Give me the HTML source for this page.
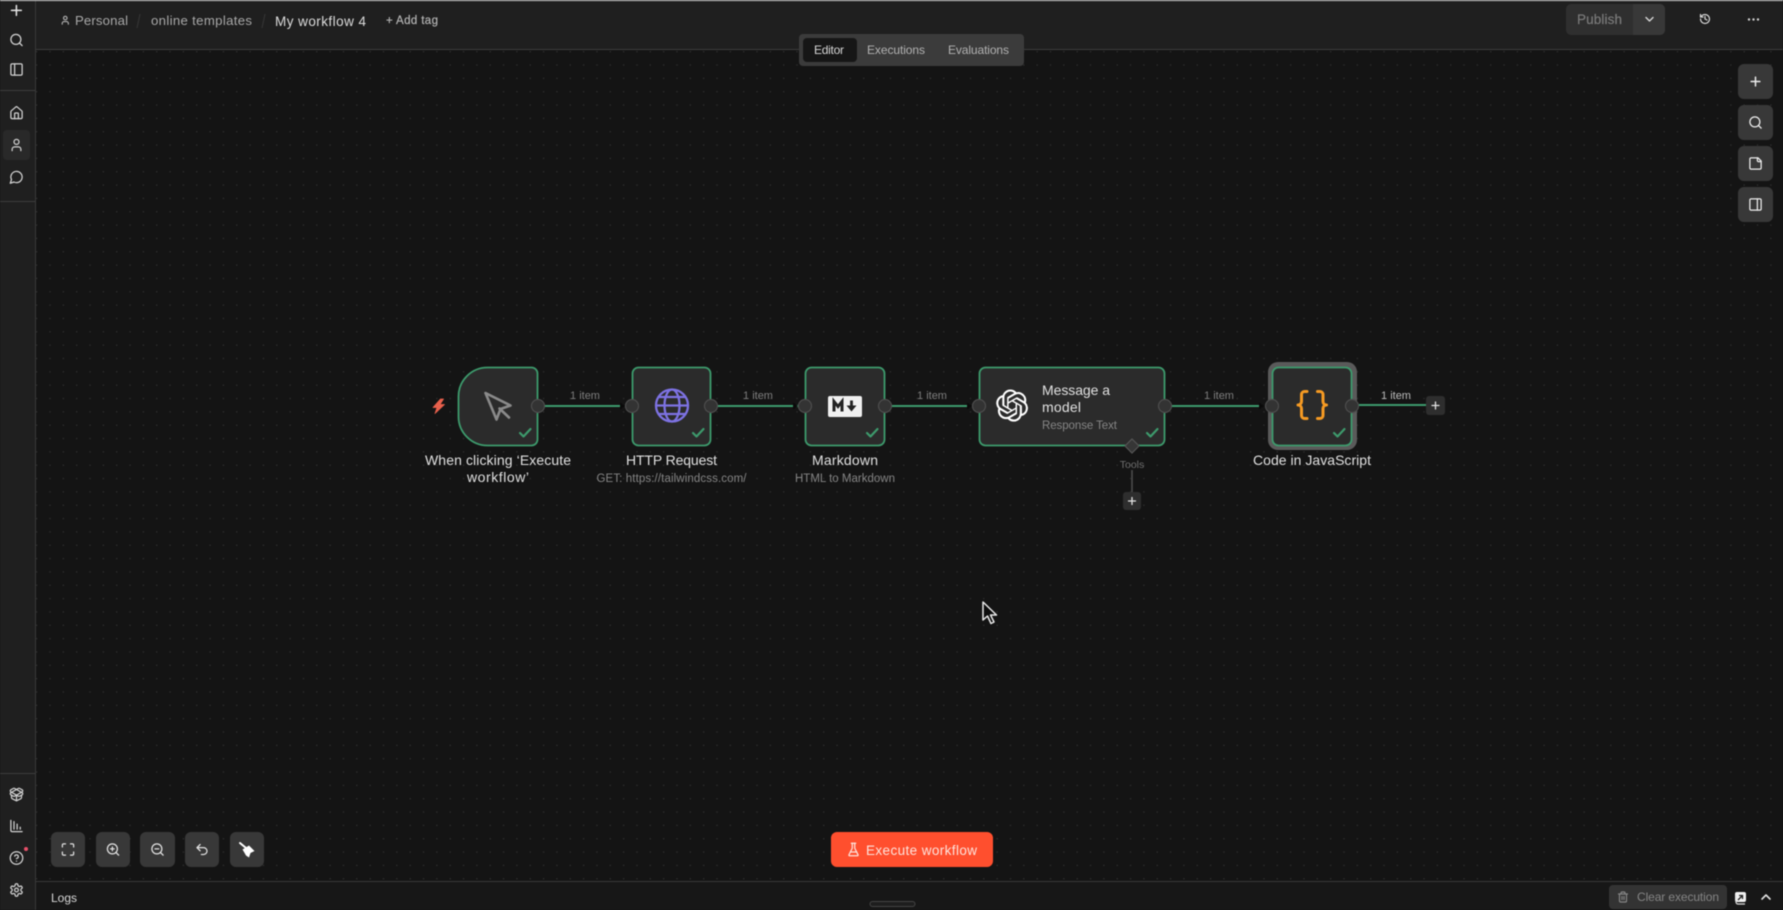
<!DOCTYPE html>
<html lang="en">
<head>
<meta charset="utf-8">
<title>My workflow 4</title>
<style>
html,body{margin:0;padding:0;width:1783px;height:910px;overflow:hidden;background:#141414}
svg{display:block;filter:blur(.4px)}
text{font-family:"Liberation Sans",sans-serif}
.i{fill:none;stroke-linecap:round;stroke-linejoin:round;stroke-width:2}
</style>
</head>
<body>
<svg width="1783" height="910" viewBox="0 0 1783 910" xmlns="http://www.w3.org/2000/svg">
<defs>
<pattern id="dots" x="30" y="45" width="13.34" height="13.34" patternUnits="userSpaceOnUse">
<circle cx="6.67" cy="6.67" r="0.6" fill="#3a3a3a"/>
</pattern>
</defs>

<!-- canvas -->
<rect width="1783" height="910" fill="#141414"/>
<rect x="36" y="50" width="1747" height="832" fill="url(#dots)"/>

<!-- header -->
<rect x="0" y="0" width="1783" height="49" fill="#1f1f1f"/>
<rect x="36" y="49" width="1747" height="1" fill="#3d3d3d"/>

<!-- sidebar -->
<rect x="0" y="0" width="35" height="910" fill="#1f1f1f"/>
<rect x="0" y="0" width="1783" height="1" fill="#dcdcdc"/>
<rect x="35" y="1" width="1" height="909" fill="#383838"/>
<rect x="0" y="90" width="35" height="1" fill="#3d3d3d"/>
<rect x="0" y="201" width="35" height="1" fill="#3d3d3d"/>
<rect x="0" y="773" width="35" height="1" fill="#3d3d3d"/>
<rect x="3" y="130" width="27" height="30" rx="4" fill="#292929"/>

<!-- sidebar icons -->
<g class="i" stroke="#e6e6e6">
<g transform="translate(8,2) scale(.7)"><path d="M5 12h14M12 5v14" stroke-width="2.2"/></g>
</g>
<g class="i" stroke="#d2d2d2" stroke-width="2">
<g transform="translate(9,32.5) scale(.625)"><circle cx="11" cy="11" r="8"/><path d="M21 21l-4.3-4.3"/></g>
<g transform="translate(9,62) scale(.625)"><rect x="3" y="3" width="18" height="18" rx="2"/><path d="M9 3v18"/></g>
<g transform="translate(9,105.5) scale(.625)"><path d="M15 21v-8a1 1 0 0 0-1-1h-4a1 1 0 0 0-1 1v8"/><path d="M3 10a2 2 0 0 1 .709-1.528l7-5.999a2 2 0 0 1 2.582 0l7 5.999A2 2 0 0 1 21 10v9a2 2 0 0 1-2 2H5a2 2 0 0 1-2-2z"/></g>
<g transform="translate(9,137.5) scale(.625)"><path d="M19 21v-2a4 4 0 0 0-4-4H9a4 4 0 0 0-4 4v2"/><circle cx="12" cy="7" r="4"/></g>
<g transform="translate(9,169.5) scale(.625)"><path d="M7.9 20A9 9 0 1 0 4 16.1L2 22Z"/></g>
<g transform="translate(9,787) scale(.625)"><path d="M12 22v-9"/><path d="M15.17 2.21a1.67 1.67 0 0 1 1.63 0L21 4.57a1.93 1.93 0 0 1 0 3.36L8.82 14.79a1.655 1.655 0 0 1-1.64 0L3 12.43a1.93 1.93 0 0 1 0-3.36z"/><path d="M20 13v3.87a2.06 2.06 0 0 1-1.11 1.83l-6 3.08a1.93 1.93 0 0 1-1.78 0l-6-3.08A2.06 2.06 0 0 1 4 16.87V13"/><path d="M21 12.43a1.93 1.93 0 0 0 0-3.36L8.83 2.2a1.64 1.64 0 0 0-1.63 0L3 4.57a1.93 1.93 0 0 0 0 3.36l12.18 6.86a1.636 1.636 0 0 0 1.63 0z"/></g>
<g transform="translate(9,818.5) scale(.625)"><path d="M3 3v16a2 2 0 0 0 2 2h16"/><path d="M8 17V5M13 17V9M18 17v-3"/></g>
<g transform="translate(9,850.5) scale(.625)"><circle cx="12" cy="12" r="10"/><path d="M9.09 9a3 3 0 0 1 5.83 1c0 2-3 3-3 3"/><path d="M12 17h.01"/></g>
<g transform="translate(9,882.5) scale(.625)"><path d="M12.22 2h-.44a2 2 0 0 0-2 2v.18a2 2 0 0 1-1 1.73l-.43.25a2 2 0 0 1-2 0l-.15-.08a2 2 0 0 0-2.73.73l-.22.38a2 2 0 0 0 .73 2.73l.15.1a2 2 0 0 1 1 1.72v.51a2 2 0 0 1-1 1.74l-.15.09a2 2 0 0 0-.73 2.73l.22.38a2 2 0 0 0 2.73.73l.15-.08a2 2 0 0 1 2 0l.43.25a2 2 0 0 1 1 1.73V20a2 2 0 0 0 2 2h.44a2 2 0 0 0 2-2v-.18a2 2 0 0 1 1-1.73l.43-.25a2 2 0 0 1 2 0l.15.08a2 2 0 0 0 2.73-.73l.22-.39a2 2 0 0 0-.73-2.73l-.15-.08a2 2 0 0 1-1-1.74v-.5a2 2 0 0 1 1-1.74l.15-.09a2 2 0 0 0 .73-2.73l-.22-.38a2 2 0 0 0-2.73-.73l-.15.08a2 2 0 0 1-2 0l-.43-.25a2 2 0 0 1-1-1.73V4a2 2 0 0 0-2-2z"/><circle cx="12" cy="12" r="3"/></g>
</g>
<circle cx="26" cy="849" r="2" fill="#e8506a"/>

<!-- breadcrumbs -->
<g class="i" stroke="#b0b0b0"><g transform="translate(60,15) scale(.44)" style="stroke-width:2.6"><path d="M19 21v-2a4 4 0 0 0-4-4H9a4 4 0 0 0-4 4v2"/><circle cx="12" cy="7" r="4"/></g></g>
<text x="75" y="25" font-size="13.2" fill="#a8a8a8" textLength="53">Personal</text>
<path d="M140 14l-3 14" stroke="#333" stroke-width="1.2"/>
<text x="151" y="25" font-size="13.2" fill="#a8a8a8" textLength="101">online templates</text>
<path d="M265 14l-3 14" stroke="#333" stroke-width="1.2"/>
<text x="275" y="26" font-size="13.5" fill="#dcdcdc" textLength="91">My workflow 4</text>
<text x="386" y="24" font-size="11.5" fill="#b4b4b4" stroke="#b4b4b4" stroke-width=".2" textLength="52">+ Add tag</text>

<!-- publish -->
<rect x="1566" y="4" width="99" height="31" rx="5" fill="#2f2f2f"/>
<path d="M1633 4h27a5 5 0 0 1 5 5v21a5 5 0 0 1-5 5h-27z" fill="#383838"/>
<text x="1577" y="24" font-size="13.5" fill="#7a7a7a" stroke="#7a7a7a" stroke-width=".2" textLength="45">Publish</text>
<path d="M1646 17.5l3.5 3.5 3.5-3.5" fill="none" stroke="#d8d8d8" stroke-width="1.4" stroke-linecap="round" stroke-linejoin="round"/>
<g class="i" stroke="#d8d8d8"><g transform="translate(1699,13) scale(.5)" style="stroke-width:2.4"><path d="M3 12a9 9 0 1 0 9-9 9.75 9.75 0 0 0-6.74 2.74L3 8"/><path d="M3 3v5h5"/><path d="M12 7v5l4 2"/></g></g>
<g fill="#d0d0d0"><circle cx="1749" cy="19.5" r="1.2"/><circle cx="1753.5" cy="19.5" r="1.2"/><circle cx="1758" cy="19.5" r="1.2"/></g>

<!-- tabs -->
<rect x="799" y="34" width="225" height="32" rx="4" fill="#3b3b3b"/>
<rect x="803" y="38" width="54" height="24" rx="4" fill="#161616"/>
<text x="814" y="54" font-size="12" fill="#d6d6d6" textLength="30">Editor</text>
<text x="867" y="54" font-size="12" fill="#b2b2b2" textLength="58">Executions</text>
<text x="948" y="54" font-size="12" fill="#b2b2b2" textLength="61">Evaluations</text>

<!-- right buttons -->
<g fill="#383838">
<rect x="1738" y="64" width="35" height="35" rx="6"/>
<rect x="1738" y="105" width="35" height="35" rx="6"/>
<rect x="1738" y="146" width="35" height="35" rx="6"/>
<rect x="1738" y="187" width="35" height="35" rx="6"/>
</g>
<g class="i" stroke="#ececec">
<g transform="translate(1748,74) scale(.625)"><path d="M5 12h14M12 5v14" stroke-width="2.4"/></g>
<g transform="translate(1748,115) scale(.625)"><circle cx="11" cy="11" r="8"/><path d="M21 21l-4.3-4.3"/></g>
<g transform="translate(1748,156) scale(.625)"><path d="M16 3H5a2 2 0 0 0-2 2v14a2 2 0 0 0 2 2h14a2 2 0 0 0 2-2V8Z"/><path d="M15 3v4a2 2 0 0 0 2 2h4"/></g>
<g transform="translate(1748,197) scale(.625)"><rect x="3" y="3" width="18" height="18" rx="2"/><path d="M15 3v18"/></g>
</g>

<!-- connections -->
<g stroke="#3d9a6c" stroke-width="2.1" fill="none">
<path d="M545 406h78"/><path d="M718 406h80"/><path d="M892 406h78"/><path d="M1172 406h90"/>
<path d="M1359 405h67"/>
</g>
<g fill="#0a0a0a">
<path d="M620 402.5l5 3.5-5 3.5z"/><path d="M793 402.5l5 3.5-5 3.5z"/><path d="M967 402.5l5 3.5-5 3.5z"/><path d="M1259 402.5l5 3.5-5 3.5z"/>
</g>
<path d="M1132 470v22" stroke="#4d4d4d" stroke-width="1.5"/>
<g font-size="11" fill="#7e7e7e" text-anchor="middle">
<text x="585" y="399">1 item</text>
<text x="758" y="399">1 item</text>
<text x="932" y="399">1 item</text>
<text x="1219" y="399">1 item</text>
<text x="1396" y="399" fill="#bcbcbc">1 item</text>
<text x="1132" y="468" font-size="10.5" fill="#6e6e6e">Tools</text>
</g>

<!-- halo -->
<rect x="1268" y="362" width="89" height="88" rx="10" fill="#5a5a5a"/>

<!-- nodes -->
<g fill="#2b2b2b" stroke="#3d9a6c" stroke-width="1.8">
<path d="M487.500 367.500h44a6 6 0 0 1 6 6v66a6 6 0 0 1-6 6h-44a29 29 0 0 1-29-29v-20a29 29 0 0 1 29-29z"/>
<rect x="632.500" y="367.500" width="78" height="78" rx="6"/>
<rect x="805.500" y="367.500" width="79" height="78" rx="6"/>
<rect x="979.500" y="367.500" width="185" height="78" rx="6"/>
<rect x="1272.500" y="367.500" width="79" height="78" rx="6"/>
</g>

<!-- handles -->
<g fill="#333" stroke="#4d4d4d" stroke-width="1.2">
<circle cx="538" cy="406" r="6.500"/>
<circle cx="632" cy="406" r="6.500"/>
<circle cx="711" cy="406" r="6.500"/>
<circle cx="805" cy="406" r="6.500"/>
<circle cx="885" cy="406" r="6.500"/>
<circle cx="979" cy="406" r="6.500"/>
<circle cx="1165" cy="406" r="6.500"/>
<circle cx="1272" cy="406" r="6.500"/>
<circle cx="1352" cy="406" r="6.500"/>
</g>
<path d="M1132 439l7 7-7 7-7-7z" fill="#363636" stroke="#555" stroke-width="1.200"/>

<!-- plus boxes -->
<rect x="1426" y="396" width="19" height="19" rx="3" fill="#2e2e2e"/>
<path d="M1432 405.500h7M1435.500 402v7" stroke="#e4e4e4" stroke-width="1.300" stroke-linecap="round"/>
<rect x="1123" y="492" width="18" height="18" rx="3" fill="#2e2e2e"/>
<path d="M1128.500 501h7M1132 497.500v7" stroke="#e4e4e4" stroke-width="1.300" stroke-linecap="round"/>

<!-- checks -->
<g fill="none" stroke="#3d9a6c" stroke-width="2.200" stroke-linecap="round" stroke-linejoin="round">
<path d="M520 433l3.500 3.500 7-7.500"/>
<path d="M693 433l3.500 3.500 7-7.500"/>
<path d="M867 433l3.500 3.500 7-7.500"/>
<path d="M1147 433l3.500 3.500 7-7.500"/>
<path d="M1334 433l3.500 3.500 7-7.500"/>
</g>

<!-- lightning -->
<path d="M440.500 399l-7.500 8.500h4l-2 6 9.500-9h-4.500l3.500-5.500z" fill="#e8604c" stroke="#e8604c" stroke-width=".8" stroke-linejoin="round"/>

<!-- cursor -->
<path d="M485.500 393l25 12.500-10 3.500-4 10.500zM499.500 408.500l9.500 9" fill="none" stroke="#8a8a8a" stroke-width="2.600" stroke-linejoin="round" stroke-linecap="round"/>

<!-- globe -->
<g fill="none" stroke="#7d72e2" stroke-width="2.300">
<circle cx="672" cy="405.500" r="16"/>
<ellipse cx="672" cy="405.500" rx="7.500" ry="16"/>
<path d="M656.500 405.500h31M658.500 397h27M658.500 414h27"/>
</g>

<!-- markdown -->
<rect x="828" y="396" width="34" height="21" rx="2" fill="#f0f0f0"/>
<path d="M834 411.500v-10l4 5 4-5v10" fill="none" stroke="#222" stroke-width="3" stroke-linejoin="miter"/>
<path d="M851.500 400.500v6" stroke="#222" stroke-width="2.800"/>
<path d="M846.500 405.500h10l-5 6z" fill="#222"/>

<!-- openai -->
<g transform="translate(996,389.500) scale(1.340)"><path fill="#fff" d="M22.2819 9.8211a5.9847 5.9847 0 0 0-.5157-4.9108 6.0462 6.0462 0 0 0-6.5098-2.9A6.0651 6.0651 0 0 0 4.9807 4.1818a5.9847 5.9847 0 0 0-3.9977 2.9 6.0462 6.0462 0 0 0 .7427 7.0966 5.98 5.98 0 0 0 .511 4.9107 6.051 6.051 0 0 0 6.5146 2.9001A5.9847 5.9847 0 0 0 13.2599 24a6.0557 6.0557 0 0 0 5.7718-4.2058 5.9894 5.9894 0 0 0 3.9977-2.9001 6.0557 6.0557 0 0 0-.7475-7.0729zm-9.022 12.6081a4.4755 4.4755 0 0 1-2.8764-1.0408l.1419-.0804 4.7783-2.7582a.7948.7948 0 0 0 .3927-.6813v-6.7369l2.02 1.1686a.071.071 0 0 1 .038.052v5.5826a4.504 4.504 0 0 1-4.4945 4.4944zm-9.6607-4.1254a4.4708 4.4708 0 0 1-.5346-3.0137l.142.0852 4.783 2.7582a.7712.7712 0 0 0 .7806 0l5.8428-3.3685v2.3324a.0804.0804 0 0 1-.0332.0615L9.74 19.9502a4.4992 4.4992 0 0 1-6.1408-1.6464zM2.3408 7.8956a4.485 4.485 0 0 1 2.3655-1.9728V11.6a.7664.7664 0 0 0 .3879.6765l5.8144 3.3543-2.0201 1.1685a.0757.0757 0 0 1-.071 0l-4.8303-2.7865A4.504 4.504 0 0 1 2.3408 7.872zm16.5963 3.8558L13.1038 8.364 15.1192 7.2a.0757.0757 0 0 1 .071 0l4.8303 2.7913a4.4944 4.4944 0 0 1-.6765 8.1042v-5.6772a.79.79 0 0 0-.407-.667zm2.0107-3.0231l-.142-.0852-4.7735-2.7818a.7759.7759 0 0 0-.7854 0L9.409 9.2297V6.8974a.0662.0662 0 0 1 .0284-.0615l4.8303-2.7866a4.4992 4.4992 0 0 1 6.6802 4.66zM8.3065 12.863l-2.02-1.1638a.0804.0804 0 0 1-.038-.0567V6.0742a4.4992 4.4992 0 0 1 7.3757-3.4537l-.142.0805L8.704 5.459a.7948.7948 0 0 0-.3927.6813zm1.0976-2.3654l2.602-1.4998 2.6069 1.4998v2.9994l-2.5974 1.4997-2.6067-1.4997Z"/></g>

<!-- code braces -->
<g fill="none" stroke="#f59a23" stroke-width="3" stroke-linecap="round" stroke-linejoin="round">
<path d="M1307 391.500h-2.500a3 3 0 0 0-3 3v7a3.500 3.500 0 0 1-3.500 3.500 3.500 3.500 0 0 1 3.500 3.500v7a3 3 0 0 0 3 3h2.500"/>
<path d="M1317.500 391.500h2.500a3 3 0 0 1 3 3v7a3.500 3.500 0 0 0 3.500 3.500 3.500 3.500 0 0 0-3.500 3.500v7a3 3 0 0 1-3 3h-2.500"/>
</g>

<!-- node labels -->
<g font-size="14" fill="#e0e0e0" text-anchor="middle">
<text x="498" y="465" textLength="146">When clicking ‘Execute</text>
<text x="498" y="482" textLength="62">workflow’</text>
<text x="671.500" y="465" textLength="91">HTTP Request</text>
<text x="845" y="465" textLength="66">Markdown</text>
<text x="1312" y="465" textLength="118">Code in JavaScript</text>
</g>
<g font-size="11.500" fill="#858585" text-anchor="middle">
<text x="671.500" y="482" textLength="150">GET: https://tailwindcss.com/</text>
<text x="845" y="482" textLength="100">HTML to Markdown</text>
</g>
<text x="1042" y="395" font-size="14" fill="#e0e0e0" textLength="68">Message a</text>
<text x="1042" y="412" font-size="14" fill="#e0e0e0" textLength="39">model</text>
<text x="1042" y="429" font-size="11.500" fill="#858585" textLength="75">Response Text</text>

<!-- mouse pointer -->
<path d="M983 602v18l4.500-4 3.500 7.500 3-1.500-3.500-7h6z" fill="#0c0c0c" stroke="#e8e8e8" stroke-width="1.500" stroke-linejoin="round"/>

<!-- bottom-left controls -->
<g fill="#383838">
<rect x="51" y="832" width="34" height="35" rx="6"/>
<rect x="96" y="832" width="34" height="35" rx="6"/>
<rect x="140" y="832" width="35" height="35" rx="6"/>
<rect x="185" y="832" width="34" height="35" rx="6"/>
<rect x="230" y="832" width="34" height="35" rx="6"/>
</g>
<g class="i" stroke="#e0e0e0">
<g transform="translate(60.500,842) scale(.625)"><path d="M8 3H5a2 2 0 0 0-2 2v3"/><path d="M21 8V5a2 2 0 0 0-2-2h-3"/><path d="M3 16v3a2 2 0 0 0 2 2h3"/><path d="M16 21h3a2 2 0 0 0 2-2v-3"/></g>
<g transform="translate(105.500,842) scale(.625)"><circle cx="11" cy="11" r="8"/><path d="m21 21-4.350-4.350"/><path d="M11 8v6"/><path d="M8 11h6"/></g>
<g transform="translate(150,842) scale(.625)"><circle cx="11" cy="11" r="8"/><path d="m21 21-4.350-4.350"/><path d="M8 11h6"/></g>
<g transform="translate(194.500,842) scale(.625)"><path d="M9 14 4 9l5-5"/><path d="M4 9h10.500a5.500 5.500 0 0 1 5.500 5.500 5.500 5.500 0 0 1-5.500 5.500H11"/></g>
</g>
<path d="M240 843l6 5" stroke="#fff" stroke-width="2" stroke-linecap="round"/>
<path d="M242.500 849.500l6.500-4 5.500 5.500-4 2-1.500 4.500-3-2-2-3.500z" fill="#fff"/>

<!-- execute -->
<rect x="831" y="832" width="162" height="35" rx="6" fill="#ff4f2e"/>
<g class="i" stroke="#fde3dc"><g transform="translate(846,842) scale(.625)"><path d="M10 2v7.527a2 2 0 0 1-.211.896L4.720 20.550a1 1 0 0 0 .900 1.450h12.760a1 1 0 0 0 .900-1.450l-5.069-10.127A2 2 0 0 1 14 9.527V2"/><path d="M8.500 2h7"/><path d="M7 16h10"/></g></g>
<text x="866" y="855" font-size="13.500" fill="#fde3dc" textLength="111">Execute workflow</text>

<!-- logs bar -->
<rect x="36" y="882" width="1747" height="28" fill="#171717"/>
<rect x="36" y="881" width="1747" height="1" fill="#3a3a3a"/>
<text x="51" y="902" font-size="12" fill="#d8d8d8" textLength="26">Logs</text>
<rect x="870" y="901.500" width="45" height="5" rx="2.500" fill="#1e1e1e" stroke="#444" stroke-width="1"/>
<rect x="1609" y="885" width="118" height="24" rx="4" fill="#333"/>
<g class="i" stroke="#858585"><g transform="translate(1617,891) scale(.5)" style="stroke-width:2.400"><path d="M3 6h18"/><path d="M19 6v14c0 1-1 2-2 2H7c-1 0-2-1-2-2V6"/><path d="M8 6V4c0-1 1-2 2-2h4c1 0 2 1 2 2v2"/><path d="M10 11v6M14 11v6"/></g></g>
<text x="1637" y="901" font-size="12" fill="#858585" textLength="82">Clear execution</text>
<rect x="1735" y="892" width="11" height="10" rx="2" fill="#f0f0f0"/>
<path d="M1736 895v7a2 2 0 0 0 2 2h7" fill="none" stroke="#e0e0e0" stroke-width="1.200"/>
<path d="M1738 900l4-4M1739 895.500h3.500v3.500" fill="none" stroke="#222" stroke-width="1.300"/>
<path d="M1762 899l4-4 4 4" fill="none" stroke="#e0e0e0" stroke-width="1.600" stroke-linecap="round" stroke-linejoin="round"/>
</svg>
</body>
</html>
